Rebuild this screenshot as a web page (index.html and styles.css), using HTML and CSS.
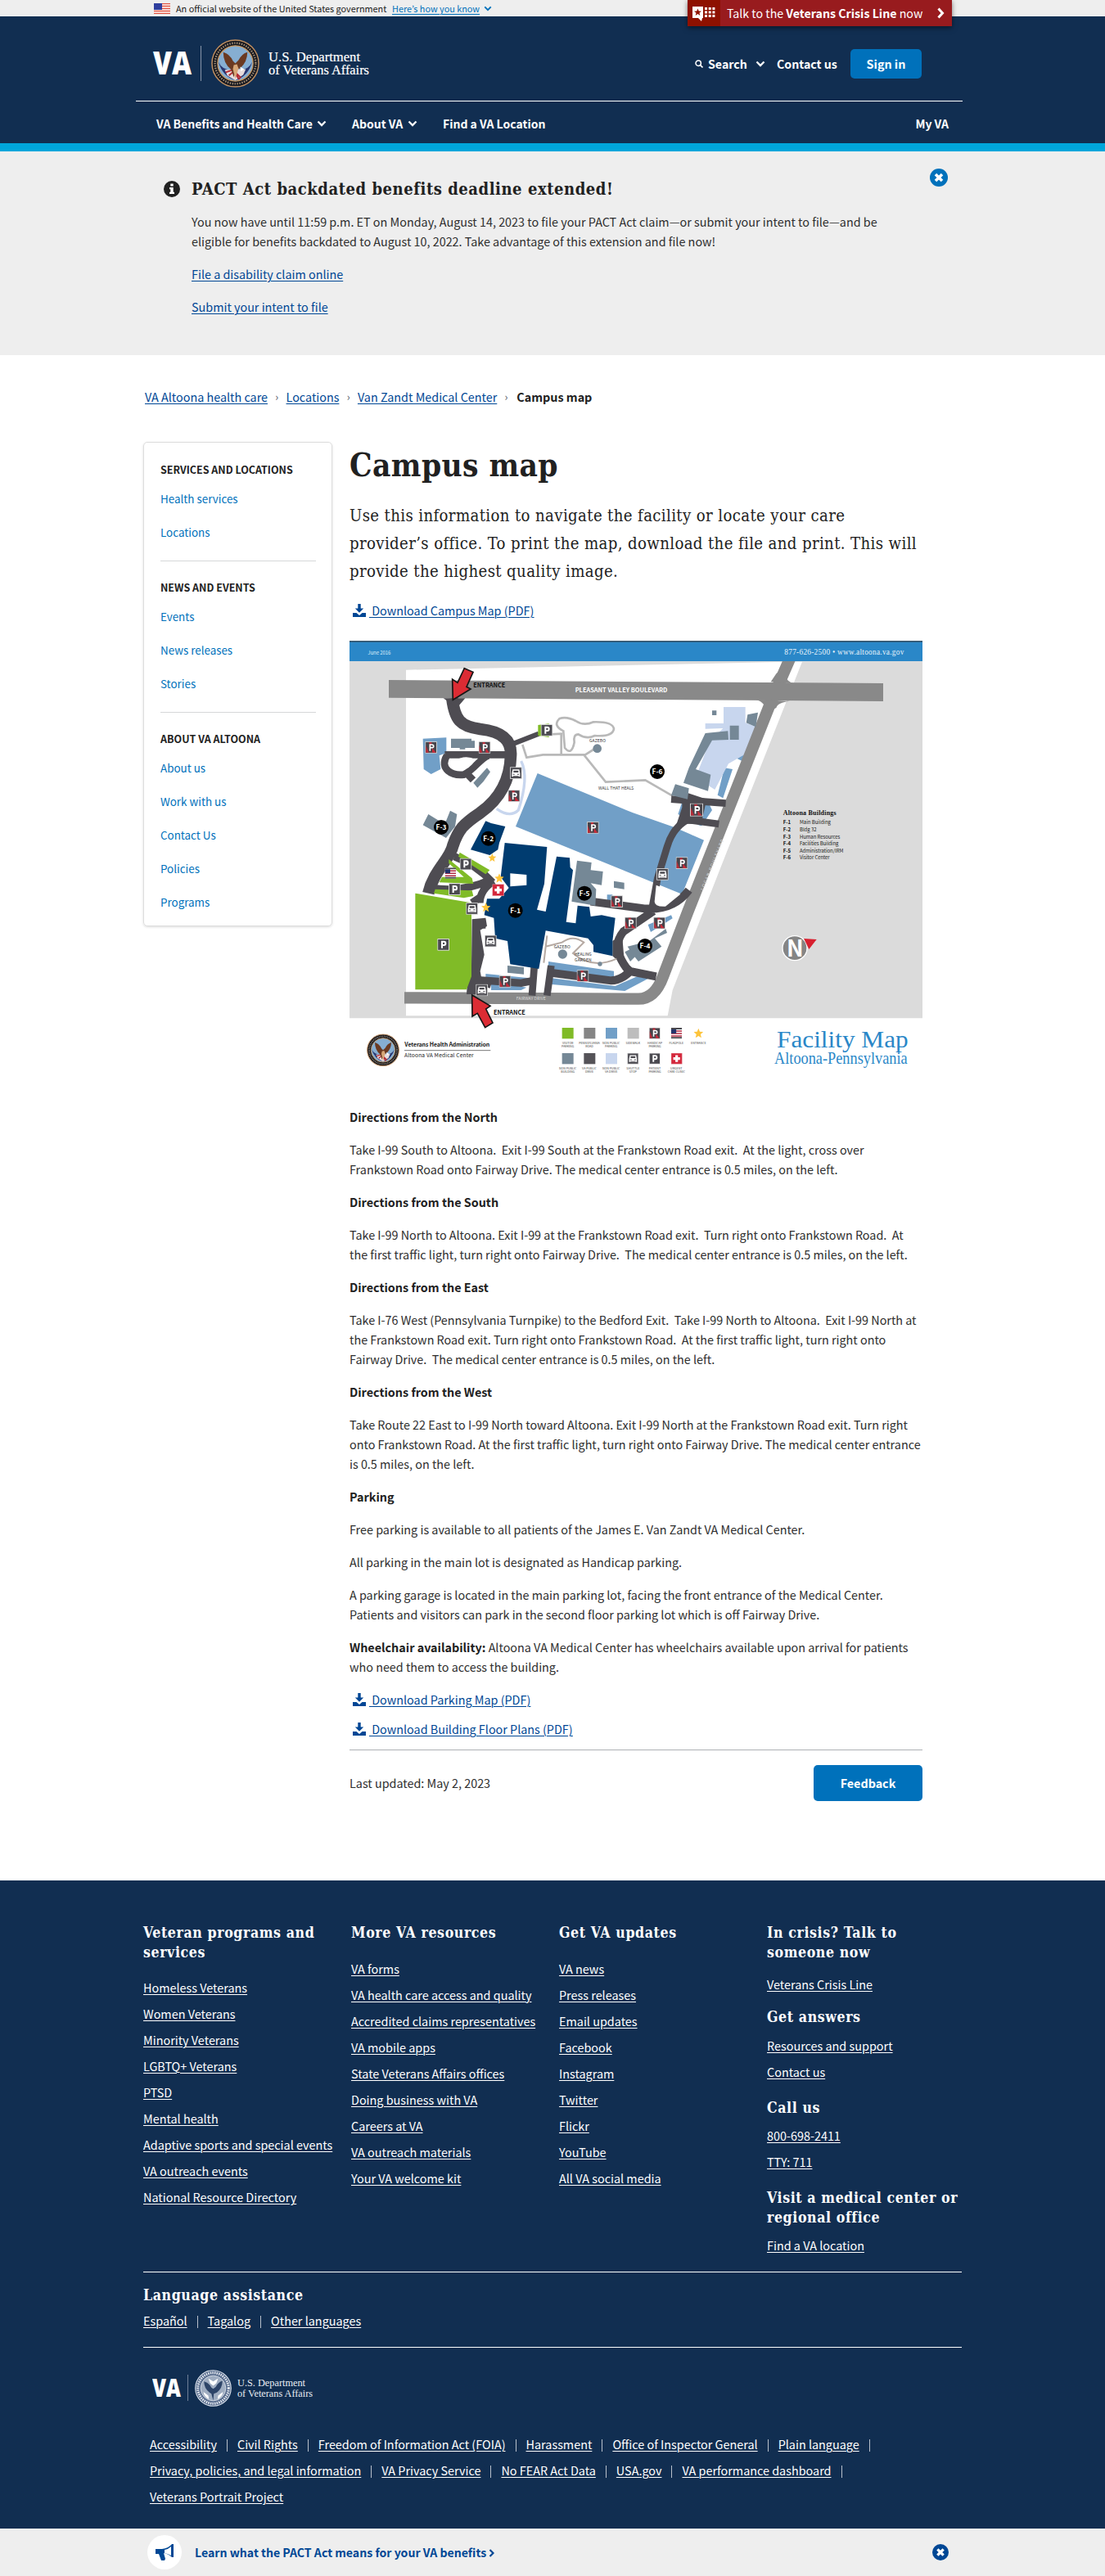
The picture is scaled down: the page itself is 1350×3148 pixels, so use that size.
FILE: index.html
```html
<!DOCTYPE html>
<html lang="en">
<head>
<meta charset="utf-8">
<title>Campus map | VA Altoona health care</title>
<link rel="stylesheet" href="styles.css">
</head>
<body>
<svg class="defs" width="0" height="0">
  <defs>
    <symbol id="down" viewBox="0 0 12 8"><path d="M1.5 1.5 6 6l4.500-4.500" fill="none" stroke="currentColor" stroke-width="2.300"/></symbol>
    <symbol id="close" viewBox="0 0 22 22"><circle cx="11" cy="11" r="11" fill="currentColor"/><path d="m7 7 8 8m0-8-8 8" stroke="#fff" stroke-width="3.600"/></symbol>
    <symbol id="download" viewBox="0 0 16 16"><path fill="currentColor" d="M6.300 0h3.400v5.500h3.500L8 10.800 2.800 5.500h3.500zM0 11h4.500L8 14l3.500-3H16v5H0z"/></symbol>
    <symbol id="seal" viewBox="0 0 60 60">
      <circle cx="30" cy="30" r="29" fill="#15171f" stroke="#c08f60" stroke-width="1.500"/>
      <circle cx="30" cy="30" r="25.300" fill="none" stroke="#a08c74" stroke-width="2.400" stroke-dasharray="1.500 1.500"/>
      <circle cx="30" cy="30" r="22" fill="#86aed2" stroke="#c9975f" stroke-width="1.300"/>
      <path d="M9 28q5 18 21 23 16-5 21-23-5 12-21 10Q14 40 9 28z" fill="#28356f"/>
      <path d="m17 38 26-1-3 7-10 7-10-6z" fill="#e7dcdc"/><path d="m18 41 9-3 10 10m-15-3 6-5 7 10" stroke="#b52a33" stroke-width="2" fill="none"/>
      <path d="M15 16q8 2 12 11l3 3 4-4q4-8 11-10 0 12-9 20l-5 2-3 9-3-9q-10-8-10-22z" fill="#6b3a22"/>
      <path d="m28 32 4-1 2 5-4 13-3-12z" fill="#d8a778"/><path d="m36 34 5 3-4 3z" fill="#fff"/>
    </symbol>
    <symbol id="seal-mono" viewBox="0 0 60 60">
      <circle cx="30" cy="30" r="29" fill="#53688a" stroke="#dce3ec" stroke-width="1.500"/>
      <circle cx="30" cy="30" r="25" fill="none" stroke="#e6ebf2" stroke-width="4" stroke-dasharray="2 1.500"/>
      <circle cx="30" cy="30" r="20.500" fill="#9fadc1" stroke="#e6ebf2"/>
      <path d="M15 19q8 2 12 10l3 2 4-3q4-8 11-10 0 12-9 19l-5 2-1 11-3-11q-12-7-12-20z" fill="#2d4468"/>
      <path d="m22 14 8 5 8-5-3 8-5 4-5-4zM14 36l8 6 1 6q-8-4-9-12zm32 0-8 6-1 6q8-4 9-12z" fill="#fff"/>
    </symbol>
    <symbol id="p" viewBox="0 0 44 44"><path fill="#4b4a50" stroke="#eee" stroke-width="3" d="M1 1h42v42H1z"/><path d="M17 35V11h7q6 0 6 6.500T24 24h-7" fill="none" stroke="#fff" stroke-width="6"/></symbol>
    <symbol id="hp" viewBox="0 0 44 44"><path fill="#47444b" stroke="#ddd" stroke-width="3" d="M1 1h42v42H1z"/><path d="M3 14 14 41H3z" fill="#b72c38"/><path d="M14 3h10v10h-8z" fill="#b72c38"/><path d="m26 24 14 17H26z" fill="#c92b3a"/><path d="M18 35V12h7q6 0 6 6t-6 5h-7" fill="none" stroke="#fff" stroke-width="5"/></symbol>
    <symbol id="bus" viewBox="0 0 44 44"><path fill="#4b4a50" stroke="#ddd" stroke-width="3" d="M1 1h42v42H1z"/><path fill="#fff" d="M10 9h24l3 14v12H7V23z"/><path fill="#4b4a50" d="M13 13h18v7H13zM11 25h6v3h-6zm16 0h6v3h-6zM12 32h20v2H12z"/></symbol>
    <symbol id="star" viewBox="0 0 32 32"><path fill="#fdc43b" d="m16 0 4.500 11 11.500 1-9 8 3 12-10-6.500L6 32l3-12-9-8 11.500-1z"/></symbol>
    <symbol id="flag" viewBox="0 0 40 40"><path fill="#fff" d="M0 0h40v40H0z"/><path fill="#4b4a50" d="M0 0h40v6H0zM0 34h40v6H0z"/><path d="M0 12h40M0 21h40M0 30h40" stroke="#b22b43" stroke-width="4.500"/><path fill="#23336b" d="M0 6h19v15H0z"/></symbol>
    <symbol id="cross" viewBox="0 0 44 44"><path fill="#d4273b" stroke="#e8a0a5" stroke-width="2" d="M1 1h42v42H1z"/><path d="M22 9v26M9 22h26" stroke="#fff" stroke-width="10"/></symbol>
  </defs>
</svg>

<div class="gov-banner">
  <div class="gov-banner-in">
    <svg width="20" height="13" viewBox="0 0 20 13"><path fill="#fff" d="M0 0h20v13H0z"/><path d="M0 .5h20M0 3.500h20M0 6.500h20M0 9.500h20M0 12.500h20" stroke="#e0523f" stroke-width="1.500"/><path fill="#2f3f9e" d="M0 0h10v8H0z"/></svg>
    <span class="gov-text">An official website of the United States government</span>
    <a class="gov-link" href="#">Here’s how you know</a>
    <svg class="gov-chev" width="10" height="7"><use href="#down"/></svg>
  </div>
</div>
<a class="crisis" href="#">
  <span class="crisis-icon"><svg width="28" height="18" viewBox="0 0 28 18"><path fill="#fff" d="M0 0h13v14h-1l-1 4-4-4H0z"/><path fill="#8e1100" d="m6.500 2.500 1.200 3 3.300.200-2.600 2 1 3.300-2.900-1.900L3.600 11l1-3.300-2.600-2 3.300-.200z"/><path d="M15 2.500h13M15 7h13M15 11.500h13" stroke="#fff" stroke-width="3" stroke-dasharray="3 1.700"/></svg></span>
  <span class="crisis-text">Talk to the <b>Veterans Crisis Line</b> now</span>
  <svg class="crisis-chev" width="9" height="14" viewBox="0 0 9 14"><path d="m1.500 1.500 5 5.500-5 5.500" stroke="#fff" stroke-width="3" fill="none"/></svg>
</a>

<header class="header">
  <div class="header-top">
    <svg class="logo" width="270" height="64" viewBox="186 46 270 64">
      <text x="187" y="91" class="logo-va" textLength="47" lengthAdjust="spacingAndGlyphs">VA</text>
      <path d="M245.500 56v43" stroke="#8795a8"/>
      <use href="#seal" x="258" y="48" width="59" height="59"/>
      <text x="328" y="75" class="logo-name" textLength="112" lengthAdjust="spacingAndGlyphs">U.S. Department</text>
      <text x="328" y="91" class="logo-name" textLength="123" lengthAdjust="spacingAndGlyphs">of Veterans Affairs</text>
    </svg>
    <div class="tools">
      <svg width="10" height="10" viewBox="0 0 10 10"><circle cx="4.200" cy="4.200" r="3.200" fill="none" stroke="#fff" stroke-width="1.500"/><path d="m6.500 6.500 3 3" stroke="#fff" stroke-width="1.700"/></svg>
      <span class="search">Search</span>
      <svg class="search-chev" width="12" height="8"><use href="#down"/></svg>
      <span class="contact">Contact us</span>
      <button class="btn signin">Sign in</button>
    </div>
  </div>
  <nav class="nav">
    <span class="nav-1">VA Benefits and Health Care</span><svg width="12" height="8"><use href="#down"/></svg>
    <span class="nav-2">About VA</span><svg width="12" height="8"><use href="#down"/></svg>
    <span class="nav-3">Find a VA Location</span>
    <span class="my-va">My VA</span>
  </nav>
</header>

<section class="alert">
  <div class="alert-in">
    <svg class="info" width="20" height="20" viewBox="0 0 20 20"><circle cx="10" cy="10" r="10" fill="#212121"/><path fill="#fff" d="M8.300 3.500h3.400v3H8.300zM7 8h4.700v5.800H13V16H7v-2.200h1.300v-3.600H7z"/></svg>
    <div class="alert-body">
      <h2>PACT Act backdated benefits deadline extended!</h2>
      <p>You now have until 11:59 p.m. ET on Monday, August 14, 2023 to file your PACT Act claim—or submit your intent to file—and be<br>eligible for benefits backdated to August 10, 2022. Take advantage of this extension and file now!</p>
      <p><a href="#">File a disability claim online</a></p>
      <p><a href="#">Submit your intent to file</a></p>
    </div>
    <svg class="alert-close" width="22" height="22"><use href="#close"/></svg>
  </div>
</section>

<nav class="crumbs"><a href="#">VA Altoona health care</a><i>›</i><a href="#">Locations</a><i>›</i><a href="#">Van Zandt Medical Center</a><i>›</i><b>Campus map</b></nav>

<div class="layout">
  <aside class="side">
    <section><h3>SERVICES AND LOCATIONS</h3><a href="#">Health services</a><a href="#">Locations</a></section>
    <section><h3>NEWS AND EVENTS</h3><a href="#">Events</a><a href="#">News releases</a><a href="#">Stories</a></section>
    <section><h3>ABOUT VA ALTOONA</h3><a href="#">About us</a><a href="#">Work with us</a><a href="#">Contact Us</a><a href="#">Policies</a><a href="#">Programs</a></section>
  </aside>

  <main class="main">
    <h1>Campus map</h1>
    <p class="intro">Use this information to navigate the facility or locate your care<br>provider’s office. To print the map, download the file and print. This will<br>provide the highest quality image.</p>
    <a class="dl" href="#"><svg width="16" height="16"><use href="#download"/></svg><u>&nbsp;Download Campus Map (PDF)</u></a>

    <svg class="map" width="700" height="541" viewBox="21 9 2100 1623">
      <path fill="#fff" d="M21 9h2100v1623H21z"/>
      <path fill="#dbdbdb" d="M21 84h2100v1309H21z"/>
      <path fill="#2a87c8" d="M21 9h2100v75H21z"/><path fill="#35566f" d="M21 9h2100v5H21z"/>
      <path fill="#fff" d="M228 116 1635 86h45l-275 694-200 510-18 94H228z"/>
      <!-- parking lots -->
      <g fill="#719fc7">
        <path d="m290 368 86-4v56l-26 10 5 50-35 18-27-18z"/>
        <path d="m710 495 350 145 150 52 110 48-80 198-610-248z"/>
        <path d="m1240 600 100 10 10 20-40 60-85-45zM1455 400l20 5-15 45-20-10zM1395 475l30 5-35 106-20-11z"/>
        <path d="m750 1185 240 35v30l-240-35zM755 1245l240 30 80-35 40 8-85 45-275-25zM520 1230l160 16v14l-160-14zM540 1260l130 20-20 10h-110zM1115 1050l85-35 5 12-80 50zM1030 1030h30v22h-30zM965 940h20v30h-20z"/>
      </g>
      <g fill="#c8d6ee"><path d="M1392 252h80v58l40 15-32 95-70 40-50 95-70-45 50-130 50-50-65 2v-20h67z"/></g>
      <path d="M650 450q30 60-10 180-30 30-80-5" fill="none" stroke="#c8d6ee" stroke-width="10"/>
      <!-- foot paths -->
      <g fill="none" stroke="#b9b9b9" stroke-width="8">
        <path d="M655 390l15 47 60-10h150l80 100 145-7 100 58M880 430l40-25M797 425v-75l-40 2"/>
        <path d="M805 340q-40-20-15-45 25-10 60 8 30 20 65 4 70-2 75 25-5 30-70 25-30 15-60-5-20 0-15 30-10 50-35 20l-5-60z"/>
      </g>
      <!-- public streets -->
      <path fill="none" stroke="#898989" stroke-width="43" d="m1637 70-72 165-210 530-93 235-92 240q-30 82-90 82l-858-4"/>
      <path fill="#dbdbdb" d="M21 1296h200v44H21z"/>
      <path fill="#2a87c8" d="M1600 50h60v34h-60z"/>
      <path fill="#898989" d="m165 153 1812 12v66l-1812-13z"/>
      <path fill="#898989" d="m1565 160 20-30 40-30-5 40q5 20 30 25zM1510 225q40 10 35 50l40-20q5-20 50-25z"/>
      <!-- campus drives -->
      <g fill="none" stroke="#4e4c52">
        <path stroke-width="44" d="M397 220c10 80 30 103 103 113 90 10 115 47 112 97-2 90-42 160-112 210-60 40-80 60-100 120-10 50-70 90-90 175"/>
        <path fill="#4e4c52" d="M365 220h80l-30 35z" stroke="none"/>
        <path stroke-width="26" d="M370 427h230M378 430c-30 50 20 75 62 70 40-20 60-60 90-70M450 495l24 25"/>
        <path stroke-width="18" d="m625 385 90-35"/>
        <path stroke-width="28" d="M405 800q80 30 140 95M320 915q110 20 220-30M550 890q-50 30-52 80M500 950l-30 20M490 1050l30 0M540 1270l-60-18 170 12 50-10"/>
        <path stroke-width="26" d="M1260 665q-55 30-75 100l-35 115-20 110M1200 590l200 15M1240 663l135 18"/>
        <path stroke-width="30" d="M905 965l175 23q120 20 185-65M1135 1000l-110 75q-50 60 20 145l100 20M750 1225l230 30q40 0 80-45"/>
        <path stroke-width="26" d="M690 1310l10-130M745 1310l15-110"/>
      </g>
      <path fill="#4e4c52" d="m470 1030 50-5 5 30-25 15 15 90-15 60 15 85h-65l5-75 13-30zM985 1110l35-25 10 120-45-40zM1240 560l90 30-20 90h-90l20-60z"/>
      <path fill="#fff" d="M405 450q40-25 78-5-30 50-75 37-30-20-3-32zM1285 690q40-15 45 30l-5 12-50-12q-10-20 10-30zM1145 905l-6 60q0 20 40 18l55-45z"/>
      <!-- visitor lots -->
      <g fill="#80bb27">
        <path d="m262 935 206 35v270l-18 48H262zM425 785l110 65-15 15-100-65zM385 810l85 70 5 20-125-5 10-20h80l-55-50zM335 920l135 5 5 20-35 7-110-17zM712 318l40-5v50l-40-6z"/>
      </g>
      <!-- buildings -->
      <g fill="#758896">
        <path d="M393 368h75v8h12v26h-35v5h-20v-5h-32zM475 530l50-55 12 15-25 35-22 23zM310 645l40 25h25l15-38 25 13-7 45-33 42-85-47z"/>
        <path d="m855 815 53 7-3 28 45 5-5 50-40-7 20 22-3 60-87-15zM990 890l38 6v24l-38-6zM600 1200l60 6v26l-60-6z"/>
        <path d="m1325 348 83-8 2 32-60 2-60 106 55 20-10 60-90-30 20-55zM1415 320h33v52h-33zM1480 280l38-8-8 53-35-15zM1350 265h16v17h-16zM1215 535l50 15-5 40-60-15z"/>
        <path d="m1040 1130 80-20 60-45 5 15-45 20 25 30-85 55-20-25zM1030 1150l50-25v30l-30 30z"/>
      </g>
      <circle cx="929" cy="404" r="16" fill="#758896"/>
      <g fill="#003c70">
        <path d="m590 750 155 15-10 135-27 95 32 7 40-202 48 5 2 35 10 10-25 190 35 5 7-65 43 5 5 35 40-5 50 10-10 85v55l-70-15v-25l-20-25-155-28-25 140-105-17-10-85-45-10-5-75-35-10 10-60h45l35-40-30-40z"/>
        <path d="m520 670 20 8 52 12-22 60-5 25-30 20-70-20z"/>
      </g>
      <path fill="#fff" d="M610 862l60 5v38l-60 5z"/>
      <g fill="none" stroke="#b5a9a2" stroke-width="6"><path d="M745 1090l-12 100M740 1130l60-15q40-30 80 0l-40 40q70 60 160 20"/></g>
      <circle cx="802" cy="1158" r="17" fill="#758896"/><circle cx="939" cy="1194" r="8" fill="#758896"/>
      <!-- markers -->
      <g>
        <use href="#hp" x="298" y="378" width="44" height="44"/><use href="#hp" x="494" y="378" width="44" height="44"/>
        <use href="#hp" x="602" y="556" width="44" height="44"/><use href="#hp" x="891" y="672" width="44" height="44"/>
        <use href="#hp" x="1269" y="605" width="48" height="48"/><use href="#hp" x="1217" y="802" width="44" height="44"/>
        <use href="#hp" x="979" y="943" width="44" height="44"/><use href="#hp" x="1029" y="1022" width="44" height="44"/>
        <use href="#hp" x="1135" y="1022" width="44" height="44"/><use href="#hp" x="569" y="1236" width="44" height="44"/>
        <use href="#hp" x="854" y="1216" width="44" height="44"/>
        <use href="#p" x="722" y="315" width="44" height="44"/><use href="#p" x="425" y="806" width="44" height="44"/>
        <use href="#p" x="384" y="898" width="44" height="44"/><use href="#p" x="343" y="1101" width="44" height="44"/>
        <use href="#bus" x="609" y="472" width="44" height="44"/><use href="#bus" x="448" y="969" width="44" height="44"/>
        <use href="#bus" x="516" y="1088" width="44" height="44"/><use href="#bus" x="484" y="1268" width="44" height="44"/>
        <use href="#bus" x="1146" y="843" width="44" height="44"/>
        <use href="#star" x="529" y="788" width="30" height="32"/><use href="#star" x="553" y="862" width="34" height="34"/><use href="#star" x="504" y="968" width="34" height="36"/>
        <use href="#cross" x="544" y="901" width="44" height="44"/><use href="#flag" x="370" y="841" width="42" height="40"/>
      </g>
      <g class="pins"><circle cx="357" cy="693" r="27"/><circle cx="530" cy="734" r="27"/><circle cx="1149" cy="489" r="27"/><circle cx="882" cy="935" r="27"/><circle cx="629" cy="998" r="27"/><circle cx="1104" cy="1128" r="27"/></g>
      <g class="pin-text"><text x="357" y="703">F-3</text><text x="530" y="744">F-2</text><text x="1149" y="499">F-6</text><text x="882" y="945">F-5</text><text x="629" y="1008">F-1</text><text x="1104" y="1138">F-4</text></g>
      <!-- entrances -->
      <g fill="#dc2c34" stroke="#161616" stroke-width="5"><path d="m442 110 32 14-24 54 15 8-65 40-2-76 19 13z"/><path d="m470 1308 67 40-16 11 25 51-28 17-28-52-19 11z"/></g>
      <g class="map-bold"><text x="475" y="179" textLength="117">ENTRANCE</text><text x="549" y="1379" textLength="116">ENTRANCE</text></g>
      <text x="848" y="198" class="road" textLength="338" lengthAdjust="spacingAndGlyphs">PLEASANT VALLEY BOULEVARD</text>
      <text x="632" y="1327" class="street" textLength="108">FAIRWAY DRIVE</text>
      <text class="street" transform="translate(1318 925) rotate(-68)" textLength="200">LOGAN BOULEVARD</text>
      <g class="place"><text x="900" y="381" textLength="60">GAZEBO</text><text x="933" y="555" textLength="130">WALL THAT HEALS</text><text x="770" y="1136" textLength="60">GAZEBO</text><text x="846" y="1165" textLength="62">HEALING</text><text x="846" y="1184" textLength="62">GARDEN</text></g>
      <text x="88" y="59" class="bar-sans" textLength="84">June 2016</text>
      <text x="1615" y="61" class="bar-serif" textLength="438">877-626-2500 • www.altoona.va.gov</text>
      <text x="1610" y="648" class="key-head" textLength="195">Altoona Buildings</text>
      <g class="key-b"><text x="1610" y="682">F-1</text><text x="1610" y="708">F-2</text><text x="1610" y="734">F-3</text><text x="1610" y="759">F-4</text><text x="1610" y="785">F-5</text><text x="1610" y="809">F-6</text></g>
      <g class="key"><text x="1671" y="682" textLength="114">Main Building</text><text x="1671" y="708" textLength="62">Bldg 32</text><text x="1671" y="734" textLength="148">Human Resources</text><text x="1671" y="759" textLength="142">Facilities Building</text><text x="1671" y="785" textLength="160">Administration/IRM</text><text x="1671" y="809" textLength="110">Visitor Center</text></g>
      <circle cx="1653" cy="1136" r="45" fill="#858585" stroke="#fff" stroke-width="4"/><text x="1623" y="1167" class="north" textLength="62" lengthAdjust="spacingAndGlyphs">N</text><path fill="#d8202f" d="m1686 1101 47 3-28 36z"/>
      <!-- title block -->
      <use href="#seal" x="84" y="1450" width="120" height="120"/>
      <text x="223" y="1498" class="admin" textLength="312">Veterans Health Administration</text><path d="M222 1511h316" stroke="#333" stroke-width="2"/><text x="222" y="1536" class="center" textLength="254">Altoona VA Medical Center</text>
      <g>
        <path fill="#80bb27" d="M800 1428h42v40h-42z"/><path fill="#858585" d="M880 1428h42v40h-42z"/><path fill="#719fc7" d="M960 1428h42v40h-42z"/><path fill="#bdbdbd" d="M1040 1428h42v40h-42z"/>
        <use href="#hp" x="1118" y="1427" width="43" height="42"/><use href="#flag" x="1199" y="1428" width="41" height="40"/><use href="#star" x="1282" y="1430" width="36" height="35"/>
        <path fill="#758896" d="M800 1521h42v40h-42z"/><path fill="#555358" d="M880 1521h42v40h-42z"/><path fill="#c8d6ee" d="M960 1521h42v40h-42z"/>
        <use href="#bus" x="1039" y="1520" width="42" height="42"/><use href="#p" x="1118" y="1520" width="43" height="42"/><use href="#cross" x="1199" y="1520" width="42" height="42"/>
      </g>
      <g class="legend">
        <text x="821" y="1488">VISITOR</text><text x="821" y="1501">PARKING</text><text x="900" y="1488">PENNSYLVANIA</text><text x="900" y="1501">ROAD</text><text x="980" y="1488">NON PUBLIC</text><text x="980" y="1501">PARKING</text><text x="1060" y="1488">SIDEWALK</text><text x="1140" y="1488">HANDICAP</text><text x="1140" y="1501">PARKING</text><text x="1219" y="1488">FLAGPOLE</text><text x="1300" y="1488">ENTRANCE</text>
        <text x="821" y="1581">NON PUBLIC</text><text x="821" y="1594">BUILDING</text><text x="900" y="1581">VA PUBLIC</text><text x="900" y="1594">DRIVE</text><text x="980" y="1581">NON PUBLIC</text><text x="980" y="1594">VA DRIVE</text><text x="1060" y="1581">SHUTTLE</text><text x="1060" y="1594">STOP</text><text x="1140" y="1581">PATIENT</text><text x="1140" y="1594">PARKING</text><text x="1219" y="1581">URGENT</text><text x="1219" y="1594">CARE CLINIC</text>
      </g>
      <text x="1587" y="1500" class="t1" textLength="482" lengthAdjust="spacingAndGlyphs">Facility Map</text>
      <text x="1578" y="1560" class="t2" textLength="488" lengthAdjust="spacingAndGlyphs">Altoona-Pennsylvania</text>
    </svg>

    <div class="copy">
      <p><b>Directions from the North</b></p>
      <p>Take I-99 South to Altoona.&nbsp; Exit I-99 South at the Frankstown Road exit.&nbsp; At the light, cross over<br>Frankstown Road onto Fairway Drive. The medical center entrance is 0.5 miles, on the left.</p>
      <p><b>Directions from the South</b></p>
      <p>Take I-99 North to Altoona. Exit I-99 at the Frankstown Road exit.&nbsp; Turn right onto Frankstown Road.&nbsp; At<br>the first traffic light, turn right onto Fairway Drive.&nbsp; The medical center entrance is 0.5 miles, on the left.</p>
      <p><b>Directions from the East</b></p>
      <p>Take I-76 West (Pennsylvania Turnpike) to the Bedford Exit.&nbsp; Take I-99 North to Altoona.&nbsp; Exit I-99 North at<br>the Frankstown Road exit. Turn right onto Frankstown Road.&nbsp; At the first traffic light, turn right onto<br>Fairway Drive.&nbsp; The medical center entrance is 0.5 miles, on the left.</p>
      <p><b>Directions from the West</b></p>
      <p>Take Route 22 East to I-99 North toward Altoona. Exit I-99 North at the Frankstown Road exit. Turn right<br>onto Frankstown Road. At the first traffic light, turn right onto Fairway Drive. The medical center entrance<br>is 0.5 miles, on the left.</p>
      <p><b>Parking</b></p>
      <p>Free parking is available to all patients of the James E. Van Zandt VA Medical Center.</p>
      <p>All parking in the main lot is designated as Handicap parking.</p>
      <p>A parking garage is located in the main parking lot, facing the front entrance of the Medical Center.<br>Patients and visitors can park in the second floor parking lot which is off Fairway Drive.</p>
      <p><b>Wheelchair availability:</b> Altoona VA Medical Center has wheelchairs available upon arrival for patients<br>who need them to access the building.</p>
    </div>
    <a class="dl" href="#"><svg width="16" height="16"><use href="#download"/></svg><u>&nbsp;Download Parking Map (PDF)</u></a>
    <a class="dl dl-last" href="#"><svg width="16" height="16"><use href="#download"/></svg><u>&nbsp;Download Building Floor Plans (PDF)</u></a>
    <div class="meta"><span>Last updated: May 2, 2023</span><button class="btn feedback">Feedback</button></div>
  </main>
</div>

<footer class="footer">
  <div class="footer-in">
    <div class="cols">
      <div class="col"><h4>Veteran programs and<br>services</h4><a href="#">Homeless Veterans</a><a href="#">Women Veterans</a><a href="#">Minority Veterans</a><a href="#">LGBTQ+ Veterans</a><a href="#">PTSD</a><a href="#">Mental health</a><a href="#">Adaptive sports and special events</a><a href="#">VA outreach events</a><a href="#">National Resource Directory</a></div>
      <div class="col"><h4>More VA resources</h4><a href="#">VA forms</a><a href="#">VA health care access and quality</a><a href="#">Accredited claims representatives</a><a href="#">VA mobile apps</a><a href="#">State Veterans Affairs offices</a><a href="#">Doing business with VA</a><a href="#">Careers at VA</a><a href="#">VA outreach materials</a><a href="#">Your VA welcome kit</a></div>
      <div class="col"><h4>Get VA updates</h4><a href="#">VA news</a><a href="#">Press releases</a><a href="#">Email updates</a><a href="#">Facebook</a><a href="#">Instagram</a><a href="#">Twitter</a><a href="#">Flickr</a><a href="#">YouTube</a><a href="#">All VA social media</a></div>
      <div class="col help"><h4 class="h-crisis">In crisis? Talk to<br>someone now</h4><a href="#">Veterans Crisis Line</a><h4 class="h-answers">Get answers</h4><a href="#">Resources and support</a><a href="#">Contact us</a><h4>Call us</h4><a href="#">800-698-2411</a><a href="#">TTY: 711</a><h4>Visit a medical center or<br>regional office</h4><a href="#">Find a VA location</a></div>
    </div>
    <div class="lang"><h4>Language assistance</h4><div class="links"><a href="#">Español</a><a href="#">Tagalog</a><a href="#">Other languages</a></div></div>
    <svg class="logo-foot" width="200" height="58" viewBox="186 2889 200 58">
      <text x="186" y="2929" class="logo-va-s" textLength="35" lengthAdjust="spacingAndGlyphs">VA</text><path d="M229.500 2902v32" stroke="#6f8097"/>
      <use href="#seal-mono" x="238" y="2896" width="45" height="45"/>
      <text x="290" y="2916" class="logo-name-s" textLength="83" lengthAdjust="spacingAndGlyphs">U.S. Department</text><text x="290" y="2929" class="logo-name-s" textLength="92" lengthAdjust="spacingAndGlyphs">of Veterans Affairs</text>
    </svg>
    <div class="links legal"><a href="#">Accessibility</a><a href="#">Civil Rights</a><a href="#">Freedom of Information Act (FOIA)</a><a href="#">Harassment</a><a href="#">Office of Inspector General</a><a href="#">Plain language</a><a href="#">Privacy, policies, and legal information</a><a href="#">VA Privacy Service</a><a href="#">No FEAR Act Data</a><a href="#">USA.gov</a><a href="#">VA performance dashboard</a><a href="#">Veterans Portrait Project</a></div>
  </div>
</footer>
<div class="promo">
  <div class="promo-in">
    <span class="promo-icon"><svg width="25" height="22" viewBox="0 0 25 22"><path fill="#004795" fill-rule="evenodd" d="M1 7h8q8-1 12-6h2v16h-2q-4-4-10-5l2 7-1 2H8L5 13H1zm11 1v4q5 1 8 3V4q-3 3-8 4z"/></svg></span>
    <a href="#">Learn what the PACT Act means for your VA benefits</a>
    <svg class="promo-chev" width="7" height="10" viewBox="0 0 7 10"><path d="m1.500 1 4 4-4 4" fill="none" stroke="#004795" stroke-width="2.200"/></svg>
    <svg class="promo-close" width="20" height="20"><use href="#close"/></svg>
  </div>
</div>
</body>
</html>
```
FILE: styles.css
```css
* { box-sizing: border-box; }
body {
  margin: 0;
  background: #fff;
  font: 14.36px/24px "Noto Sans CJK JP", "Noto Sans", sans-serif;
  color: #2e2e2e;
}
h1, h2, h3, h4, p { margin: 0; }
b { font-weight: 700; color: #212121; }
a { color: #004795; text-decoration: underline; text-underline-offset: 2px; text-decoration-thickness: 1px; }
h1, h2, h4, .intro { font-family: "DejaVu Serif Condensed", "DejaVu Serif", serif; font-stretch: condensed; white-space: nowrap; }
.defs { display: block; }
.btn { border: 0; border-radius: 5px; background: #0071bb; color: #fff; font: 700 14.32px/24px "Noto Sans CJK JP", sans-serif; padding: 0; }

.gov-banner { height: 20px; background: #eee; }
.gov-banner-in { display: flex; align-items: center; padding-left: 188px; height: 20px; font-size: 10.850px; line-height: 20px; white-space: nowrap; color: #212121; }
.gov-text { margin-left: 7px; width: 264px; }
.gov-link { color: #0071bb; width: 112px; }
.gov-chev { color: #0071bb; }

.crisis { position: absolute; left: 840px; top: 0; width: 323px; height: 32px; display: flex; align-items: center; background: #981b1e; color: #fff; text-decoration: none; box-shadow: 0 2px 6px rgba(0,0,0,.5); white-space: nowrap; font-size: 14.200px; }
.crisis b { color: #fff; }
.crisis-icon { width: 40px; height: 32px; background: #8e1100; padding: 8px 0 0 6px; line-height: 0; }
.crisis-text { margin-left: 8px; width: 257px; }

.header { background: #112e51; height: 165px; border-bottom: 10px solid #00a6db; color: #fff; font-weight: 700; }
.header-top { width: 1010px; margin-left: 166px; height: 104px; border-bottom: 1px solid #fff; display: flex; justify-content: space-between; align-items: center; padding: 13px 49px 0 20px; }
.logo-va, .logo-va-s { font: 800 38px "Open Sans", sans-serif; fill: #fff; }
.logo-va-s { font-size: 30px; }
.logo-name { font: 17px "Liberation Serif", serif; fill: #fff; stroke: #fff; stroke-width: .2px; }
.logo-name-s { font: 12.500px "Liberation Serif", serif; fill: #e8edf3; }
.tools { display: flex; align-items: center; white-space: nowrap; width: 278px; font-size: 14.200px; }
.search { margin-left: 6px; width: 58px; }
.search-chev { margin-right: 14px; }
.contact { width: 90px; }
.signin { width: 87px; height: 36px; }
.nav { display: flex; align-items: center; height: 53px; margin-left: 191px; width: 968px; white-space: nowrap; font-size: 14px; }
.nav-1 { width: 196px; }
.nav-2 { margin-left: 31px; width: 68px; }
.nav-3 { margin-left: 31px; }
.my-va { margin-left: auto; }

.alert { background: #eee; height: 249px; }
.alert-in { display: flex; padding: 33px 0 0 200px; }
.info { margin-top: 3px; }
.alert-body { margin-left: 14px; width: 902px; white-space: nowrap; }
.alert-body h2 { font-size: 20px; letter-spacing: .55px; line-height: 26px; color: #212121; margin-bottom: 15px; }
.alert-body p { margin-bottom: 16px; }
.alert-close { margin-top: -12px; color: #0071bb; }

.crumbs { display: flex; margin: 39px 0 43px 177px; white-space: nowrap; }
.crumbs i { font-style: normal; width: 22.500px; text-align: center; color: #5b616b; font-size: 13px; }
.crumbs b { margin-left: 1.500px; }

.layout { display: flex; gap: 21px; padding-left: 175px; }
.side { width: 231px; height: 592px; border: 1px solid #ddd; border-radius: 5px; box-shadow: 0 1px 3px rgba(0,0,0,.14); padding: 1px 19px 0 20px; white-space: nowrap; }
.side section { padding: 22px 0 14px; }
.side section + section { border-top: 1px solid #d6d7d9; }
.side h3 { font-size: 12.500px; line-height: 20px; color: #212121; margin-bottom: 5px; }
.side a { display: block; line-height: 41px; font-size: 13.400px; color: #0071bb; text-decoration: none; }

.main { width: 700px; }
.main h1 { margin: 5px 0 20px; font-size: 38.500px; letter-spacing: .4px; line-height: 48px; color: #212121; }
.intro { font-size: 20.200px; letter-spacing: .36px; line-height: 34px; color: #212121; margin-bottom: 19px; }
.dl { display: flex; align-items: center; padding-left: 4px; white-space: nowrap; }
.dl u { margin-left: 4px; }
.dl-last { margin-top: 12px; }
.map { display: block; margin: 25px 0 29px; }
.copy { white-space: nowrap; }
.copy p { margin-bottom: 16px; }
.meta { margin-top: 13px; border-top: 1px solid #aeb0b5; padding-top: 18px; display: flex; justify-content: space-between; align-items: center; }
.feedback { width: 133px; height: 44px; }

.map text { font-family: "Noto Sans CJK JP", sans-serif; }
.map .pin-text text { fill: #fff; font-weight: 700; font-size: 25px; text-anchor: middle; }
.map .map-bold text { font-weight: 700; font-size: 22px; fill: #111; }
.map .road { font-weight: 700; font-size: 22px; fill: #fff; }
.map .street { font-size: 15px; fill: #ddd; }
.map .place text { font-size: 15px; fill: #333; }
.map .bar-sans { font-size: 18px; fill: #d9ebf8; }
.map .bar-serif { font-family: "Liberation Serif", serif; font-size: 28px; fill: #e8f3fb; }
.map .key-head { font-family: "Liberation Serif", serif; font-weight: 700; font-size: 24px; fill: #111; }
.map .key text { font-size: 18px; fill: #222; }
.map .key-b text { font-size: 18px; font-weight: 700; fill: #111; }
.map .north { font-weight: 700; font-size: 84px; fill: #fff; }
.map .admin { font-weight: 700; font-size: 21px; fill: #222; }
.map .center { font-size: 20px; fill: #222; }
.map .legend text { font-size: 11px; fill: #444; text-anchor: middle; }
.map .t1, .map .t2 { font-family: "Liberation Serif", serif; font-size: 86px; fill: #2a87c8; }
.map .t2 { font-size: 62px; }

.footer { background: #112e51; margin-top: 97px; height: 792px; padding: 52px 0 0 175px; color: #fff; }
.footer-in { width: 1000px; }
.footer a { color: #fff; }
.cols { display: grid; grid-template-columns: repeat(4, 254px); width: 1016px; height: 426px; white-space: nowrap; font-size: 14.400px; }
.col h4, .lang h4 { font-size: 17.600px; letter-spacing: .6px; line-height: 23.500px; }
.col h4 { margin-bottom: 16px; }
.col a { display: block; line-height: 32px; }
.help h4 { margin: 16px 0 7px; }
.help .h-crisis { margin: 0 0 12px; }
.help .h-answers { margin-top: 12px; }
.lang { border-top: 1px solid #fff; border-bottom: 1px solid #fff; height: 93px; padding-top: 16px; }
.lang .links { margin-top: 7px; }
.links { display: flex; flex-wrap: wrap; white-space: nowrap; font-size: 14.400px; }
.links a:not(:last-child)::after { content: ""; display: inline-block; width: 1px; height: 15px; background: #b8c0cb; margin: 0 12px; vertical-align: -3px; }
.logo-foot { display: block; margin: 20px 0 24px 11px; }
.legal { margin-left: 8px; width: 930px; line-height: 32px; }

.promo { background: #eee; height: 58px; }
.promo-in { display: flex; align-items: center; height: 58px; padding-left: 180px; white-space: nowrap; }
.promo-icon { width: 42px; height: 42px; border-radius: 50%; background: #fff; display: flex; align-items: center; justify-content: center; margin-right: 16px; }
.promo a { font-weight: 700; text-decoration: none; font-size: 14.100px; }
.promo-chev { margin: 2px 0 0 3px; }
.promo-close { margin: 0 191px 0 auto; color: #004795; }
```
